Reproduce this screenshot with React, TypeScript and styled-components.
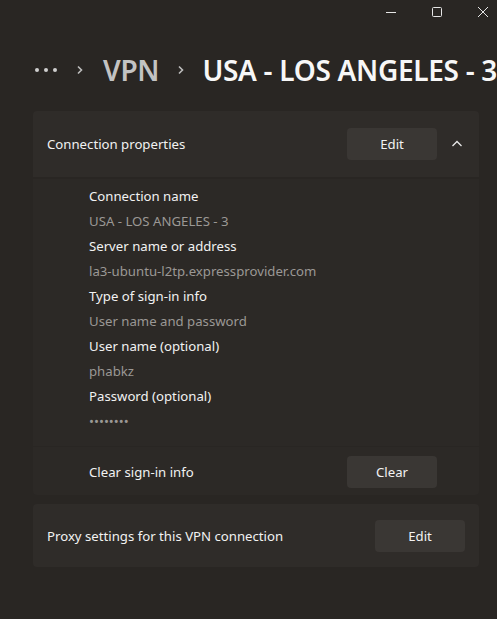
import React from "react";
import styled, { createGlobalStyle } from "styled-components";

const Global = createGlobalStyle`
  html, body { margin: 0; padding: 0; background: #292623; }
  body { font-family: "Noto Sans", "Open Sans", sans-serif; color: #f2f2f2; }
  * { box-sizing: border-box; }
`;

const Page = styled.div`
  width: 497px;
  height: 619px;
  background: #292623;
  overflow: hidden;
  display: flex;
  flex-direction: column;
`;

const TitleBar = styled.div`
  height: 24px;
  margin-right: -9px;
  display: flex;
  justify-content: flex-end;
  align-items: center;
`;

const WinButton = styled.div`
  width: 46px;
  height: 24px;
  display: flex;
  align-items: center;
  justify-content: center;
  color: #e6e6e6;
`;

const Breadcrumb = styled.div`
  margin-top: 26px;
  height: 40px;
  padding-left: 35px;
  display: flex;
  align-items: center;
  white-space: nowrap;
  overflow: hidden;
`;

const Dots = styled.span`
  display: flex;
  gap: 5px;
  align-items: center;
`;

const Dot = styled.span`
  width: 4px;
  height: 4px;
  border-radius: 50%;
  background: #cfcfcf;
`;

const Sep = styled.span<{ $w: number }>`
  display: flex;
  justify-content: center;
  width: ${(p) => p.$w}px;
  color: #bdbdbd;
`;

const Crumb = styled.span<{ $current?: boolean }>`
  font-size: 28px;
  font-weight: 600;
  letter-spacing: -0.3px;
  color: ${(p) => (p.$current ? "#f7f7f7" : "#c3c3c3")};
`;

const Content = styled.div`
  margin-top: 21px;
  padding: 0 18px 0 33px;
  display: flex;
  flex-direction: column;
`;

const Group = styled.div`
  display: flex;
  flex-direction: column;
  gap: 2px;
`;

const Header = styled.div`
  height: 66px;
  background: #2f2c29;
  border-radius: 4px 4px 0 0;
  display: flex;
  align-items: center;
  padding: 0 6px 0 14px;
`;

const Card = styled.div`
  margin-top: 9px;
  height: 63px;
  background: #2f2c29;
  border-radius: 4px;
  display: flex;
  align-items: center;
  padding: 0 14px;
`;

const Label = styled.div`
  flex: 1;
  font-size: 13.2px;
  color: #f2f2f2;
`;

const Button = styled.div`
  width: 90px;
  height: 32px;
  border-radius: 4px;
  background: #3a3734;
  display: flex;
  align-items: center;
  justify-content: center;
  font-size: 13.2px;
  color: #f2f2f2;
`;

const Chevron = styled.div`
  width: 32px;
  height: 32px;
  margin-left: 4px;
  display: flex;
  align-items: center;
  justify-content: center;
`;

const Details = styled.div`
  background: #2c2926;
  padding: 5px 0 12px 56px;
  display: flex;
  flex-direction: column;
`;

const Line = styled.div<{ $value?: boolean }>`
  height: 25px;
  line-height: 25px;
  font-size: 13.2px;
  color: ${(p) => (p.$value ? "#9b9895" : "#f2f2f2")};
`;

const ClearRow = styled.div`
  margin-top: 1px;
  height: 48px;
  background: #2c2926;
  border-radius: 0 0 4px 4px;
  display: flex;
  align-items: center;
  padding: 2px 42px 0 56px;
`;

const Icon = ({ children }: { children: React.ReactNode }) => (
  <svg width="12" height="12" viewBox="0 0 12 12" fill="none" stroke="currentColor" strokeWidth="1">
    {children}
  </svg>
);

const ChevronRight = () => (
  <svg width="8" height="12" viewBox="0 0 8 12" fill="none" stroke="currentColor" strokeWidth="1.6">
    <path d="M2 2.5 L5.5 6 L2 9.5" />
  </svg>
);

export default function App() {
  const fields: [string, string][] = [
    ["Connection name", "USA - LOS ANGELES - 3"],
    ["Server name or address", "la3-ubuntu-l2tp.expressprovider.com"],
    ["Type of sign-in info", "User name and password"],
    ["User name (optional)", "phabkz"],
    ["Password (optional)", "••••••••"],
  ];
  return (
    <Page>
      <Global />
      <TitleBar>
        <WinButton>
          <Icon>
            <path d="M1 6.5 H11" />
          </Icon>
        </WinButton>
        <WinButton>
          <Icon>
            <rect x="1.5" y="1.5" width="9" height="9" rx="1" />
          </Icon>
        </WinButton>
        <WinButton>
          <Icon>
            <path d="M1 1 L11 11 M11 1 L1 11" />
          </Icon>
        </WinButton>
      </TitleBar>
      <Breadcrumb>
        <Dots>
          <Dot />
          <Dot />
          <Dot />
        </Dots>
        <Sep $w={48}>
          <ChevronRight />
        </Sep>
        <Crumb>VPN</Crumb>
        <Sep $w={45}>
          <ChevronRight />
        </Sep>
        <Crumb $current>USA - LOS ANGELES - 3</Crumb>
      </Breadcrumb>
      <Content>
        <Group>
          <Header>
            <Label>Connection properties</Label>
            <Button>Edit</Button>
            <Chevron>
              <svg width="12" height="8" viewBox="0 0 12 8" fill="none" stroke="#e8e8e8" strokeWidth="1.3">
                <path d="M1.5 6 L6 1.5 L10.5 6" />
              </svg>
            </Chevron>
          </Header>
          <Details>
            {fields.map(([k, v]) => (
              <React.Fragment key={k}>
                <Line>{k}</Line>
                <Line $value>{v}</Line>
              </React.Fragment>
            ))}
          </Details>
        </Group>
        <ClearRow>
          <Label>Clear sign-in info</Label>
          <Button>Clear</Button>
        </ClearRow>
        <Card>
          <Label>Proxy settings for this VPN connection</Label>
          <Button>Edit</Button>
        </Card>
      </Content>
    </Page>
  );
}
